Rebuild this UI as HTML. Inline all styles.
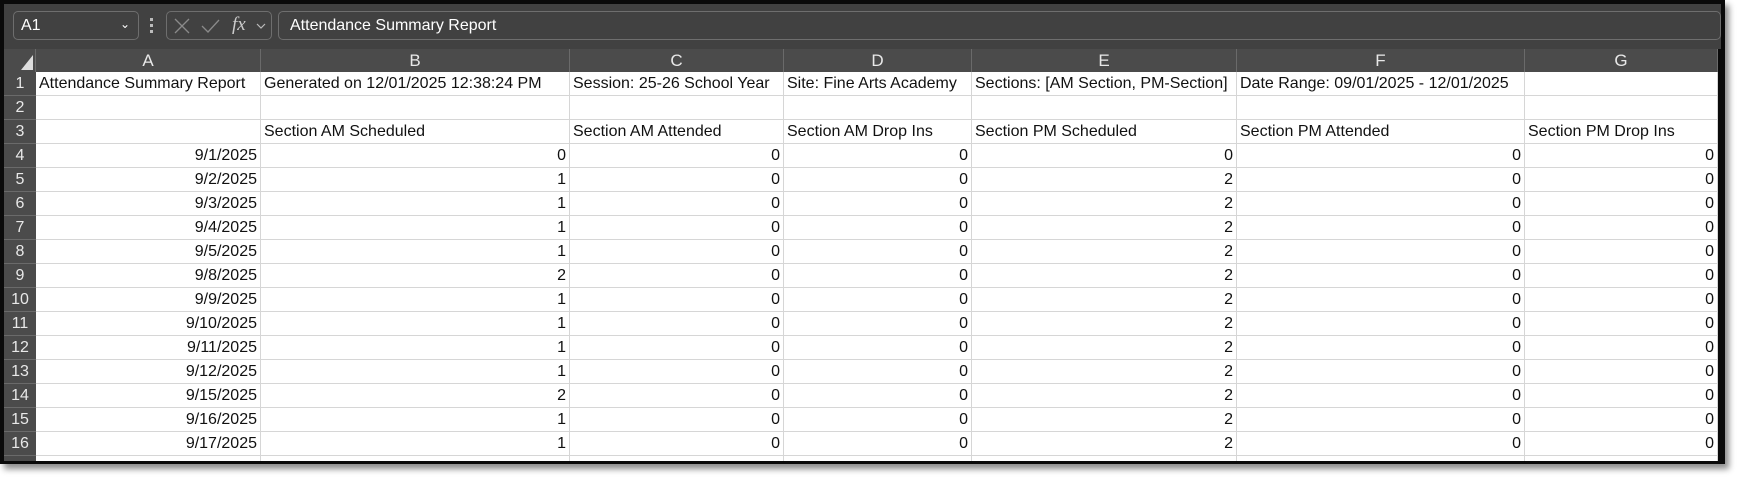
<!DOCTYPE html>
<html><head><style>
*{margin:0;padding:0;box-sizing:border-box}
body{width:1738px;height:481px;background:#fff;position:relative;overflow:hidden;font-family:"Liberation Sans",sans-serif}
.frame{position:absolute;left:0;top:0;width:1725px;height:464px;background:#0a0a0a;box-shadow:4px 5px 6px rgba(0,0,0,.45)}
.top{position:absolute;left:4px;top:4px;width:1717px;height:45px;background:#414141}
.box{position:absolute;border:1px solid #6e6e6e;border-radius:5px;height:29px;top:11px;color:#fff;font-size:16px;line-height:27px}
.hdr{position:absolute;top:49px;height:23px;background:#4b4b4b;color:#e8e8e8;font-size:17px;line-height:23px;text-align:center;border-right:1px solid #6a6a6a}
.rh{position:absolute;left:4px;width:32px;height:24px;background:#4b4b4b;color:#e8e8e8;font-size:16px;line-height:24px;text-align:center;border-bottom:1px solid #6a6a6a}
.c{position:absolute;height:24px;background:#fff;border-right:1px solid #d6d6d6;border-bottom:1px solid #d6d6d6;font-size:16px;line-height:23px;color:#111;padding:0 3px;white-space:nowrap;overflow:hidden}
.r{text-align:right}
</style></head><body>
<div class="frame"></div>
<div class="top"></div>
<div class="box" style="left:13px;width:126px;padding-left:7px">A1<span style="position:absolute;right:8px;top:-1px;font-size:12px">&#8964;</span></div>
<div style="position:absolute;left:150px;top:18px;width:3px;height:15px;border-left:3px dotted #bbb"></div>
<div class="box" style="left:166px;width:106px">
<svg width="106" height="27" style="position:absolute;left:0;top:0"><path d="M8 7 L22 21 M22 7 L8 21" stroke="#8a8a8a" stroke-width="1.3" fill="none"/><path d="M35 14 L41 20 L52 8" stroke="#8a8a8a" stroke-width="1.3" fill="none"/><path d="M90 12 l4 4 l4 -4" stroke="#bbb" stroke-width="1.2" fill="none"/></svg>
<span style="position:absolute;left:65px;top:-1px;font-family:'Liberation Serif',serif;font-style:italic;font-size:19px;color:#ccc">fx</span></div>
<div class="box" style="left:278px;width:1443px;padding-left:11px">Attendance Summary Report</div>
<div class="hdr" style="left:4px;width:32px;background:#4b4b4b"><svg width="30" height="23" style="position:absolute;left:0;top:0"><path d="M17 21 L29 21 L29 6 Z" fill="#ddd"/></svg></div>
<div class="hdr" style="left:36px;width:225px">A</div>
<div class="hdr" style="left:261px;width:309px">B</div>
<div class="hdr" style="left:570px;width:214px">C</div>
<div class="hdr" style="left:784px;width:188px">D</div>
<div class="hdr" style="left:972px;width:265px">E</div>
<div class="hdr" style="left:1237px;width:288px">F</div>
<div class="hdr" style="left:1525px;width:193px">G</div>
<div id="g"></div>
<script>
var cols=[[36,225],[261,309],[570,214],[784,188],[972,265],[1237,288],[1525,193]];
var rows=[
["Attendance Summary Report","Generated on 12/01/2025 12:38:24 PM","Session: 25-26 School Year","Site: Fine Arts Academy","Sections: [AM Section, PM-Section]","Date Range: 09/01/2025 - 12/01/2025",""],
["","","","","","",""],
["","Section AM Scheduled","Section AM Attended","Section AM Drop Ins","Section PM Scheduled","Section PM Attended","Section PM Drop Ins"]];
var d=[["9/1/2025",0,0],["9/2/2025",1,2],["9/3/2025",1,2],["9/4/2025",1,2],["9/5/2025",1,2],["9/8/2025",2,2],["9/9/2025",1,2],["9/10/2025",1,2],["9/11/2025",1,2],["9/12/2025",1,2],["9/15/2025",2,2],["9/16/2025",1,2],["9/17/2025",1,2]];
d.forEach(function(x){rows.push([x[0],x[1],0,0,x[2],0,0])});
rows.push(["","","","","","",""]);
var h="";
rows.forEach(function(r,i){var y=72+i*24;var hh=i==16?5:24;
if(i<16)h+='<div class="rh" style="top:'+y+'px">'+(i+1)+'</div>';else h+='<div class="rh" style="top:'+y+'px;height:5px;border:0"></div>';
r.forEach(function(v,j){var num=i>=3;h+='<div class="c'+(num?' r':'')+'" style="left:'+cols[j][0]+'px;width:'+cols[j][1]+'px;top:'+y+'px;height:'+hh+'px;'+(i==16?'border-bottom:0':'')+'">'+(i<16?v:'')+'</div>'})});
document.getElementById("g").innerHTML=h;
</script>
</body></html>
